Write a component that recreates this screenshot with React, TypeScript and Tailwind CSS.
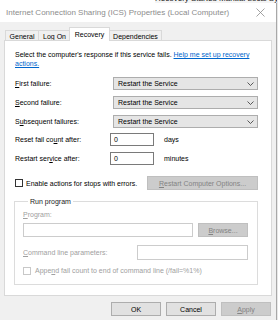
import React from 'react'

const Chevron = () => (
  <svg width="7" height="4" viewBox="0 0 7 4" className="shrink-0">
    <path d="M0.5 0.5 L3.5 3.5 L6.5 0.5" fill="none" stroke="#333" strokeWidth="0.8" />
  </svg>
)

const Combo: React.FC<{ label: React.ReactNode }> = ({ label }) => (
  <div className="flex items-center h-[13px]">
    <div className="w-[98px]">{label}</div>
    <div className="w-[145px] h-[13px] flex items-center justify-between pl-[4px] pr-[3px] bg-[#e5e5e5] border border-[#adadad]">
      <span>Restart the Service</span>
      <Chevron />
    </div>
  </div>
)

const Checkbox: React.FC<{ disabled?: boolean }> = ({ disabled }) => (
  <div
    className={`w-[8px] h-[8px] shrink-0 border bg-white ${
      disabled ? 'border-[#c8c8c8]' : 'border-[#333]'
    }`}
  />
)

const App: React.FC = () => {
  return (
    <div className="w-[278px] h-[320px] flex overflow-hidden bg-[#e8e8e8] font-['Liberation_Sans',Arial,sans-serif] text-[7px] leading-[9px] text-black">
      <div className="relative w-[277px] h-full flex flex-col bg-[#f0f0f0] border-r border-[#a8a8a8]">
        {/* window behind, peeking above the title bar */}
        <div className="absolute top-0 left-[155px] w-[122px] h-[3px] overflow-hidden bg-[#f4f4f4]">
          <div className="mt-[-6px] whitespace-nowrap text-[8px] text-[#1a1a1a]">
            Recovery Started Manual Local System
          </div>
        </div>

        {/* title bar */}
        <div className="h-[22px] shrink-0 flex items-center justify-between pl-[6px] pr-[11px] pt-[3px] bg-white">
          <span className="text-[8px] text-[#8c8c8c] whitespace-nowrap">
            Internet Connection Sharing (ICS) Properties (Local Computer)
          </span>
          <svg width="9" height="9" viewBox="0 0 9 9">
            <path d="M0.5 0.5 L8.5 8.5 M8.5 0.5 L0.5 8.5" stroke="#8c8c8c" strokeWidth="0.8" />
          </svg>
        </div>

        {/* tabs */}
        <div className="flex items-end h-[14px] mt-[5px] ml-[5px]">
          <div className="h-[11px] w-[33px] flex items-center justify-center border-l border-t border-[#d9d9d9]">General</div>
          <div className="h-[11px] w-[32px] flex items-center justify-center border-l border-t border-[#d9d9d9]">Log On</div>
          <div className="relative z-10 h-[14px] w-[41px] flex items-center justify-center bg-white border-l border-t border-r border-[#d9d9d9] ml-[-1px] pb-[1px]">
            Recovery
          </div>
          <div className="h-[11px] w-[52px] flex items-center justify-center border-t border-r border-[#d9d9d9]">Dependencies</div>
        </div>

        {/* tab panel */}
        <div className="mt-[-1px] ml-[4px] w-[268px] h-[256px] bg-white border border-[#d9d9d9] pl-[10px] pt-[9px] flex flex-col">
          <p>
            Select the computer's response if this service fails.{' '}
            <span className="text-[#0066cc] underline">Help me set up recovery actions.</span>
          </p>

          <div className="mt-[9px] flex flex-col gap-[6px]">
            <Combo label={<><span className="underline">F</span>irst failure:</>} />
            <Combo label={<><span className="underline">S</span>econd failure:</>} />
            <Combo label={<>S<span className="underline">u</span>bsequent failures:</>} />
          </div>

          <div className="mt-[5px] flex flex-col gap-[6px]">
            <div className="flex items-center h-[13px]">
              <div className="w-[95px]">Reset fail co<span className="underline">u</span>nt after:</div>
              <div className="w-[44px] h-[13px] border border-[#7a7a7a] pl-[3px] flex items-center">0</div>
              <span className="ml-[10px]">days</span>
            </div>
            <div className="flex items-center h-[13px]">
              <div className="w-[95px]">Restart ser<span className="underline">v</span>ice after:</div>
              <div className="w-[44px] h-[13px] border border-[#7a7a7a] pl-[3px] flex items-center">0</div>
              <span className="ml-[10px]">minutes</span>
            </div>
          </div>

          <div className="mt-[11px] flex items-center h-[14px]">
            <Checkbox />
            <span className="ml-[3px] w-[121px]">Enable actions for stops with errors.</span>
            <div className="w-[111px] h-[14px] flex items-center justify-center bg-[#cccccc] border border-[#bfbfbf] text-[#838383]">
              <span><span className="underline">R</span>estart Computer Options...</span>
            </div>
          </div>

          <fieldset className="mt-[7px] ml-[-1px] w-[244px] h-[88px] border border-[#dcdcdc] pl-[8px] pr-[9px]">
            <legend className="ml-[5px] px-[2px] text-[#1a1a1a]">Run program</legend>
            <div className="mt-[4px] text-[#a0a0a0]">
              <span className="underline">P</span>rogram:
            </div>
            <div className="mt-[4px] flex items-center justify-between">
              <div className="w-[170px] h-[14px] border border-[#cccccc] bg-white" />
              <div className="w-[50px] h-[14px] flex items-center justify-center bg-[#cccccc] border border-[#bfbfbf] text-[#838383]">
                <span><span className="underline">B</span>rowse...</span>
              </div>
            </div>
            <div className="mt-[8px] flex items-center justify-between">
              <span className="text-[#a0a0a0]"><span className="underline">C</span>ommand line parameters:</span>
              <div className="w-[111px] h-[15px] border border-[#cccccc] bg-white" />
            </div>
            <div className="mt-[6px] flex items-center">
              <Checkbox disabled />
              <span className="ml-[4px] text-[#a0a0a0]">
                Appe<span className="underline">n</span>d fail count to end of command line (/fail=%1%)
              </span>
            </div>
          </fieldset>
        </div>

        {/* dialog buttons */}
        <div className="mt-[6px] ml-[111px] flex gap-[5px]">
          <div className="w-[50px] h-[14px] flex items-center justify-center bg-[#e1e1e1] border border-[#adadad]">OK</div>
          <div className="w-[50px] h-[14px] flex items-center justify-center bg-[#e1e1e1] border border-[#adadad]">Cancel</div>
          <div className="w-[50px] h-[14px] flex items-center justify-center bg-[#cccccc] border border-[#bfbfbf] text-[#838383]">
            <span><span className="underline">A</span>pply</span>
          </div>
        </div>
      </div>
    </div>
  )
}

export default App
